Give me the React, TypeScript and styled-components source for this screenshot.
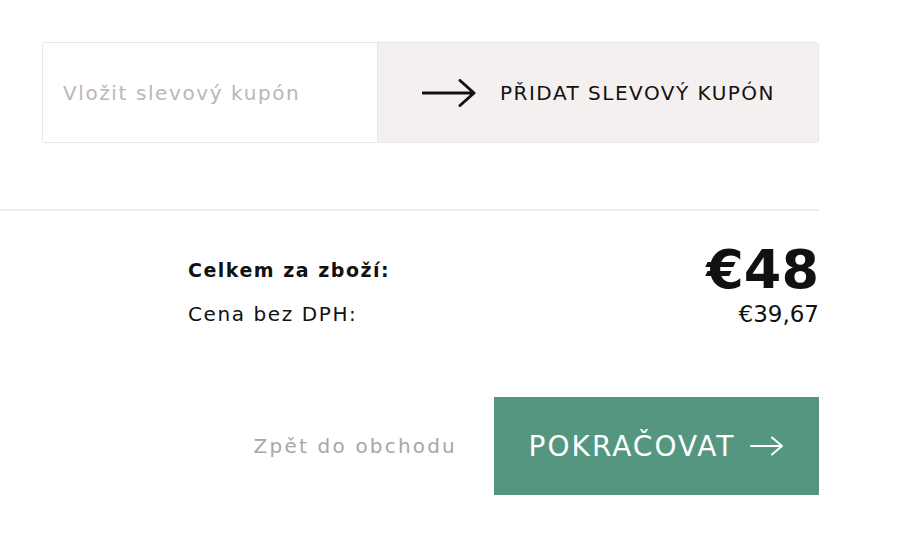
import React from 'react'
import styled, { createGlobalStyle } from 'styled-components'

const GlobalStyle = createGlobalStyle`
  body {
    margin: 0;
    background: #fff;
    font-family: 'DejaVu Sans', 'Noto Sans', sans-serif;
    color: #111;
  }
`

const Page = styled.div`
  width: 819px;
  padding-top: 42px;
`

const CouponRow = styled.div`
  display: flex;
  margin-left: 42px;
  height: 101px;
  border: 1px solid #e9e6e6;
  border-radius: 3px;
  box-sizing: border-box;
  overflow: hidden;
`

const CouponInput = styled.input`
  width: 334px;
  box-sizing: border-box;
  border: none;
  outline: none;
  padding: 0 0 0 20px;
  font-family: inherit;
  font-size: 20px;
  letter-spacing: 1.6px;
  color: #111;
  background: #fff;
  &::placeholder {
    color: #bcb6b6;
  }
`

const CouponButton = styled.button`
  flex: 1;
  display: flex;
  align-items: center;
  gap: 24px;
  padding: 0 0 0 44px;
  border: none;
  border-left: 1px solid #e9e6e6;
  background: #f4f0f0;
  font-family: inherit;
  font-size: 20px;
  letter-spacing: 1.5px;
  color: #111;
  text-transform: uppercase;
  cursor: pointer;
`

const Divider = styled.hr`
  margin: 66px 0 0;
  border: none;
  border-top: 2px solid #ececec;
`

const Summary = styled.div`
  margin: 31px 0 0 188px;
  display: grid;
  grid-template-columns: 1fr auto;
  align-items: center;
  row-gap: 3px;
`

const Label = styled.div<{ $bold?: boolean }>`
  font-size: ${p => (p.$bold ? '19px' : '20px')};
  letter-spacing: ${p => (p.$bold ? '1.5px' : '1.6px')};
  font-weight: ${p => (p.$bold ? 700 : 400)};
`

const Price = styled.div<{ $big?: boolean }>`
  font-family: 'DejaVu Sans', sans-serif;
  text-align: right;
  font-weight: ${p => (p.$big ? 700 : 400)};
  font-size: ${p => (p.$big ? '54px' : '23px')};
  line-height: ${p => (p.$big ? '56px' : '26px')};
`

const Actions = styled.div`
  display: flex;
  justify-content: flex-end;
  align-items: center;
  gap: 37px;
  margin-top: 70px;
`

const BackLink = styled.a`
  font-size: 20px;
  letter-spacing: 2.2px;
  color: #aaa6a6;
  text-decoration: none;
`

const NextButton = styled.button`
  width: 325px;
  height: 98px;
  display: flex;
  align-items: center;
  justify-content: center;
  gap: 15px;
  border: none;
  background: #559680;
  color: #fff;
  font-family: inherit;
  font-size: 28px;
  letter-spacing: 2px;
  text-transform: uppercase;
  cursor: pointer;
`

const Arrow = ({ w, h, stroke }: { w: number; h: number; stroke: number }) => (
  <svg width={w} height={h} viewBox={`0 0 ${w} ${h}`} fill="none">
    <path
      d={`M1 ${h / 2} H${w - 2} M${w - 2 - h / 2} 1.5 L${w - 2} ${h / 2} L${w - 2 - h / 2} ${h - 1.5}`}
      stroke="currentColor"
      strokeWidth={stroke}
      strokeLinecap="round"
      strokeLinejoin="round"
    />
  </svg>
)

export default function App() {
  return (
    <>
      <GlobalStyle />
      <Page>
        <CouponRow>
          <CouponInput placeholder="Vložit slevový kupón" />
          <CouponButton>
            <Arrow w={54} h={28} stroke={3} />
            Přidat slevový kupón
          </CouponButton>
        </CouponRow>
        <Divider />
        <Summary>
          <Label $bold>Celkem za zboží:</Label>
          <Price $big>€48</Price>
          <Label>Cena bez DPH:</Label>
          <Price>€39,67</Price>
        </Summary>
        <Actions>
          <BackLink href="#">Zpět do obchodu</BackLink>
          <NextButton>
            Pokračovat
            <Arrow w={34} h={20} stroke={2} />
          </NextButton>
        </Actions>
      </Page>
    </>
  )
}
